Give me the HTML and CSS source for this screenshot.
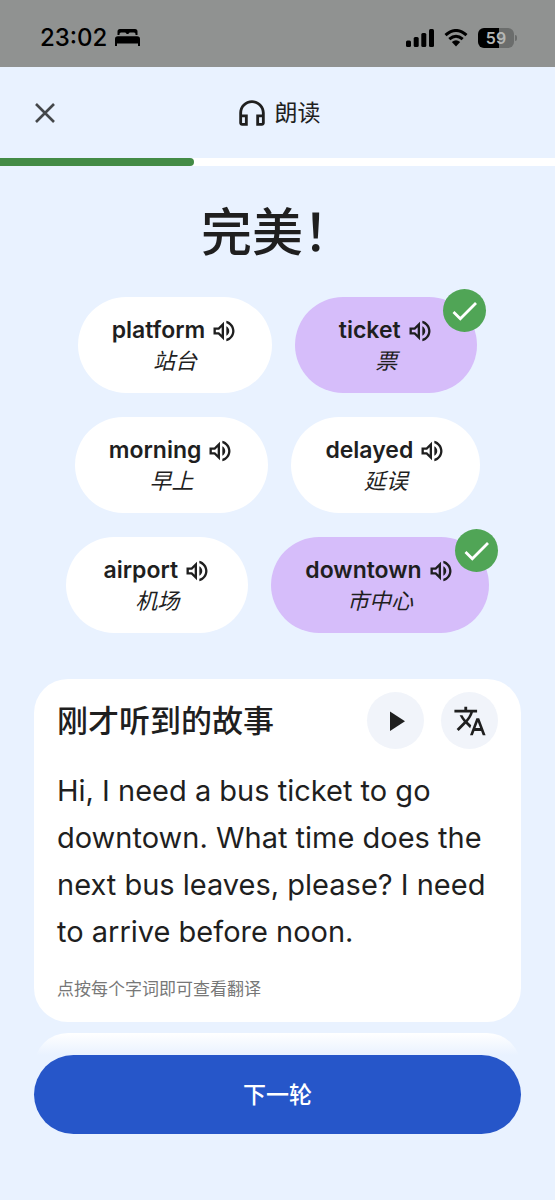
FILE: index.html
```html
<!DOCTYPE html>
<html lang="zh-CN">
<head>
<meta charset="utf-8">
<meta name="viewport" content="width=device-width, initial-scale=1">
<title>朗读</title>
<link rel="stylesheet" href="styles.css">
</head>
<body>
<svg class="defs" aria-hidden="true">
  <symbol id="speaker" viewBox="0 0 24 24"><path d="M3 9v6h4l5 5V4L7 9H3zm7-.17v6.34L7.83 13H5v-2h2.83L10 8.83zM16.5 12c0-1.77-1.02-3.29-2.5-4.03v8.05c1.48-.73 2.5-2.25 2.5-4.02zM14 3.23v2.06c2.89.86 5 3.54 5 6.71s-2.11 5.85-5 6.71v2.06c4.01-.91 7-4.49 7-8.77s-2.99-7.86-7-8.77z"/></symbol>
  <symbol id="check" viewBox="0 0 43 43"><path d="M10.5 23l6.800 6.800L33 14" fill="none" stroke="#fff" stroke-width="2.800"/></symbol>
</svg>

<div class="status">
  <div class="status-left">
    <span class="clock">23:02</span>
    <svg class="bed" viewBox="0 0 25 17"><path d="M2.500 7V2.500Q2.500 0 5 0H20Q22.500 0 22.500 2.500V6H20.500V5Q20.500 3.500 19 3.500H15Q13.500 3.500 13.500 5H11.500Q11.500 3.500 10 3.500H6Q4.500 3.500 4.500 5V6H2.500ZM0 17V10Q0 7.200 2.800 7.200H22.200Q25 7.200 25 10V17H23V14.500H2V17Z"/></svg>
  </div>
  <div class="status-right">
    <svg class="signal" viewBox="0 0 28 18"><rect x="0" y="11.500" width="5" height="6.500" rx="1.500"/><rect x="7.700" y="8" width="5" height="10" rx="1.500"/><rect x="15.300" y="4" width="5" height="14" rx="1.500"/><rect x="23" y="0" width="5" height="18" rx="1.500"/></svg>
    <svg class="wifi" viewBox="0 0 24 18"><path d="M1.500 6.200Q12-3.200 22.500 6.200M5.300 10.200Q12 4.300 18.700 10.200" fill="none" stroke="#000" stroke-width="3"/><path d="M7.800 13Q12 9.500 16.200 13L12 17.500Z"/></svg>
    <span class="battery">59</span>
  </div>
</div>

<header class="topbar">
  <button class="close" type="button" aria-label="关闭"><svg viewBox="0 0 20 20"><path d="M1 1L19 19M19 1L1 19" fill="none" stroke="#44474a" stroke-width="2.600"/></svg></button>
  <div class="mode">
    <svg viewBox="0 0 24 24"><path d="M12 3c-4.970 0-9 4.030-9 9v7c0 1.100.9 2 2 2h4v-8H5v-1c0-3.870 3.130-7 7-7s7 3.130 7 7v1h-4v8h4c1.100 0 2-.9 2-2v-7c0-4.970-4.030-9-9-9zM7 15v4H5v-4h2zm12 4h-2v-4h2v4z"/></svg>
    <span>朗读</span>
  </div>
</header>
<div class="progress"><div class="progress-fill" style="width:35%"></div></div>

<main>
  <h1>完美！</h1>
  <ul class="chips">
    <li class="chip"><button type="button" class="word">platform <svg><use href="#speaker"/></svg></button><i>站台</i></li>
    <li class="chip done"><button type="button" class="word">ticket <svg><use href="#speaker"/></svg></button><i>票</i><svg class="badge"><use href="#check"/></svg></li>
    <li class="chip"><button type="button" class="word">morning <svg><use href="#speaker"/></svg></button><i>早上</i></li>
    <li class="chip"><button type="button" class="word">delayed <svg><use href="#speaker"/></svg></button><i>延误</i></li>
    <li class="chip"><button type="button" class="word">airport <svg><use href="#speaker"/></svg></button><i>机场</i></li>
    <li class="chip done"><button type="button" class="word">downtown <svg><use href="#speaker"/></svg></button><i>市中心</i><svg class="badge"><use href="#check"/></svg></li>
  </ul>

  <section class="card">
    <div class="card-head">
      <h2>刚才听到的故事</h2>
      <button type="button" class="round" aria-label="播放"><svg viewBox="0 0 34 34"><path d="M11 7.500V27L26 17.200Z"/></svg></button>
      <button type="button" class="round" aria-label="翻译"><svg viewBox="0 0 24 24"><path d="M12.870 15.070l-2.540-2.510.03-.03c1.740-1.940 2.980-4.170 3.710-6.530H17V4h-7V2H8v2H1v1.990h11.170C11.500 7.920 10.440 9.750 9 11.350 8.070 10.320 7.300 9.190 6.690 8h-2c.73 1.630 1.730 3.170 2.980 4.560l-5.090 5.020L4 19l5-5 3.110 3.110.76-2.040zM18.500 10h-2L12 22h2l1.120-3h4.750L21 22h2l-4.500-12zm-2.620 7l1.620-4.330L19.120 17h-3.240z"/></svg></button>
    </div>
    <p class="story">Hi, I need a bus ticket to go downtown. What time does the next bus leaves, please? I need to arrive before noon.</p>
    <p class="hint">点按每个字词即可查看翻译</p>
  </section>
  <div class="peek"><div class="next-card"></div></div>
</main>

<footer><button type="button" class="next">下一轮</button></footer>
</body>
</html>
```
FILE: styles.css
```css
* { box-sizing: border-box; }

body {
  margin: 0;
  min-height: 100vh;
  background: #e9f2ff;
  color: #1f1f1f;
  font-family: Inter, "Noto Sans CJK SC", sans-serif;
}

h1, h2, p, ul { margin: 0; padding: 0; }
svg { display: block; flex: none; fill: currentColor; }
button { border: 0; padding: 0; background: none; color: inherit; font: inherit; cursor: pointer; }
.defs { position: absolute; width: 0; height: 0; }

.status {
  display: flex;
  justify-content: space-between;
  align-items: center;
  height: 67px;
  padding: 8px 41px 0 40px;
  background: #909291;
  color: #000;
}
.status-left, .status-right { display: flex; align-items: center; }
.status-left { gap: 8px; }
.status-right { gap: 10px; }
.clock { font-size: 24px; font-weight: 500; }
.bed { width: 25px; height: 17px; }
.signal { width: 28px; height: 18px; }
.wifi { width: 24px; height: 18px; }
.battery {
  position: relative;
  width: 36px;
  height: 20px;
  border-radius: 6px;
  background: linear-gradient(90deg, #000 59%, #6b6d6c 59%);
  color: #b4b6b5;
  font-size: 16px;
  font-weight: 600;
  line-height: 20px;
  text-align: center;
}
.battery::after {
  content: "";
  position: absolute;
  left: 37px;
  top: 7px;
  width: 2px;
  height: 6px;
  border-radius: 0 2px 2px 0;
  background: #6b6d6c;
}

.topbar {
  display: grid;
  grid-template-columns: 1fr auto 1fr;
  align-items: center;
  height: 91px;
  padding: 0 35px;
}
.close { width: 20px; height: 20px; }
.close svg { width: 20px; height: 20px; }
.mode { display: flex; align-items: center; gap: 6px; font-size: 23px; font-weight: 400; line-height: 34px; }
.mode svg { width: 34px; height: 34px; }

.progress { height: 8px; background: #fff; }
.progress-fill { height: 8px; border-radius: 0 4px 4px 0; background: #438b46; }

main { padding: 0 34px; }

h1 {
  padding: 32px 0 29px;
  font-size: 51px;
  font-weight: 500;
  line-height: 70px;
  text-align: center;
}

.chips {
  display: flex;
  flex-wrap: wrap;
  justify-content: center;
  gap: 24px 23px;
  list-style: none;
}
.chip {
  position: relative;
  display: flex;
  flex-direction: column;
  align-items: center;
  min-width: 182px;
  padding: 18px 34px 16px;
  border-radius: 48px;
  background: #fff;
  font-size: 22px;
  line-height: 31px;
}
.chip.done { background: #d6bdfa; }
.word { display: flex; align-items: center; gap: 5px; font-size: 23px; font-weight: 600; }
.word svg { width: 28px; height: 28px; }
.badge {
  position: absolute;
  top: -8px;
  right: -9px;
  width: 43px;
  height: 43px;
  border-radius: 50%;
  background: #50a556;
}

.card {
  margin-top: 46px;
  padding: 13px 23px 20px;
  border-radius: 34px;
  background: #fff;
}
.card-head { display: flex; align-items: center; gap: 17px; }
h2 { flex: 1; font-size: 31px; font-weight: 500; line-height: 46px; }
.round {
  display: grid;
  place-items: center;
  width: 57px;
  height: 57px;
  border-radius: 50%;
  background: #f1f4fa;
}
.round svg { width: 34px; height: 34px; }
.story { margin-top: 18px; font-size: 29px; line-height: 47px; }
.hint { margin-top: 21px; color: #777; font-size: 17px; line-height: 26px; }

.peek { height: 22px; margin-top: 11px; overflow: hidden; }
.next-card {
  height: 68px;
  border-radius: 34px;
  background: linear-gradient(#fff, #e9f2ff 22px);
}

footer { padding: 0 34px 66px; }
.next {
  width: 100%;
  height: 79px;
  padding-bottom: 3px;
  border-radius: 40px;
  background: #2656c9;
  color: #fff;
  font-size: 23px;
  font-weight: 500;
}
```
